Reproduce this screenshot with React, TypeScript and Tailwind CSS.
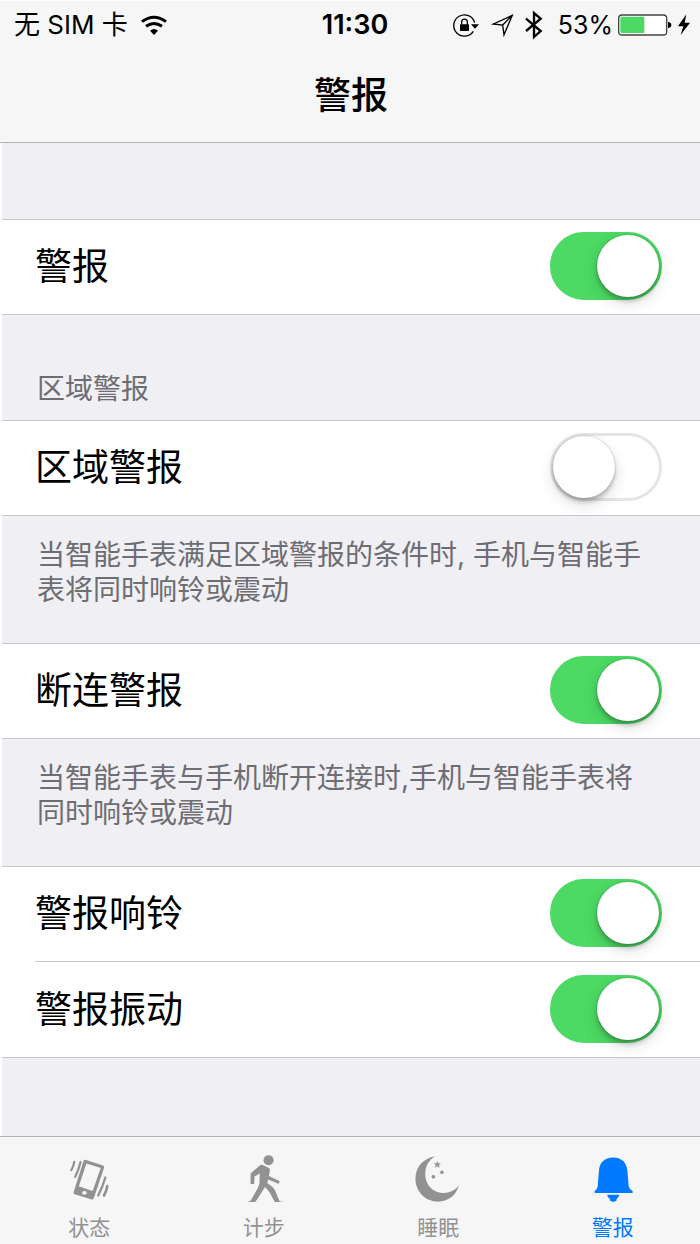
import { useState, type ReactNode } from "react";

type TabKey = "status" | "steps" | "sleep" | "alarm";

function WifiIcon() {
  return (
    <svg viewBox="423 39 84 66" className="h-[22px] w-7" fill="none" stroke="#000" strokeWidth="9" aria-hidden="true">
      <path d="M429 62 Q465 35 501 62" />
      <path d="M441 76 Q465 59 489 76" />
      <path d="M453 89 Q465 79 477 89 L465 102 Z" fill="#000" stroke="none" />
    </svg>
  );
}

function RotationLockIcon() {
  return (
    <svg viewBox="304 30 84 84" className="size-7" fill="none" stroke="#000" aria-hidden="true">
      <path d="M372 65 A32 32 0 1 0 368 91" strokeWidth="4" />
      <path d="M361 70 H385 L373 83 Z" fill="#000" stroke="none" />
      <rect x="328" y="70" width="27" height="20" rx="2" fill="#000" stroke="none" />
      <path d="M333 71 V63 a8.5 8.5 0 0 1 17 0 V71" strokeWidth="4" />
    </svg>
  );
}

function LocationIcon() {
  return (
    <svg viewBox="420 30 78 84" className="h-7 w-[26px]" fill="none" stroke="#000" aria-hidden="true">
      <path d="M487 43 L430 69 L458 72 L462 101 Z M487 43 L458 72" strokeWidth="4" />
    </svg>
  );
}

function BluetoothIcon() {
  return (
    <svg viewBox="525 30 60 90" className="h-[30px] w-5" fill="none" stroke="#000" strokeWidth="7" aria-hidden="true">
      <path d="M531 56 L575 93 L555 111 V39 L575 56 L531 93" />
    </svg>
  );
}

function BatteryIcon() {
  return (
    <svg viewBox="801 36 168 78" className="h-[26px] w-14" aria-hidden="true">
      <rect x="806" y="45" width="144" height="60" rx="10" fill="#fff" stroke="#444" strokeWidth="4" />
      <path d="M811 54 q0 -4 4 -4 H883 V99 H815 q-4 0 -4 -4 Z" fill="#4cd964" />
      <path d="M954 66 q10 1 10 9 t-10 9 Z" fill="#000" />
    </svg>
  );
}

function BoltIcon() {
  return (
    <svg viewBox="981 39 42 72" className="h-6 w-3.5" aria-hidden="true">
      <path d="M1009 43 L984 79 H1000 L992 105 L1020 68 H1004 Z" fill="#000" />
    </svg>
  );
}

function PhoneIcon() {
  return (
    <svg viewBox="189 66 156 156" className="size-[52px]" aria-hidden="true">
      <path
        fill="currentColor"
        fillRule="evenodd"
        d="M256 87 L310 104 Q315 106 313 111 L282 204 Q280 209 275 208 L223 192 Q218 190 220 185 L250 91 Q252 86 256 87 Z M259 98 L303 112 L278 182 L236 168 Z M253 182 a7 6 0 1 0 .1 0 Z"
      />
      <g fill="none" stroke="currentColor" strokeWidth="7" strokeLinecap="round">
        <path d="M222 93 Q220 106 213 118" />
        <path d="M241 94 Q235 118 225 139" />
        <path d="M317 141 Q309 170 295 196" />
        <path d="M323 167 Q321 182 313 196" strokeWidth="8" />
      </g>
    </svg>
  );
}

function WalkIcon() {
  return (
    <svg viewBox="714 66 156 156" className="size-[52px]" fill="currentColor" aria-hidden="true">
      <circle cx="806" cy="88" r="15.5" />
      <path d="M781 103 Q786 101 791 104 L806 111 Q811 114 810 120 L807 136 L838 151 Q842 154 836 160 L805 147 L802 158 L817 169 Q823 174 826 181 L840 214 H848 V216 H825 L809 186 L795 170 L770 210 L764 216 H745 V213 H751 L773 173 L778 159 L779 129 L763 138 L762 161 H751 V132 Q751 128 755 125 Z" />
    </svg>
  );
}

function MoonIcon() {
  return (
    <svg viewBox="189 66 156 156" className="size-[52px]" fill="currentColor" aria-hidden="true">
      <path d="M258 76 C222 82 198 109 198 145 C198 184 229 215 266 215 C298 215 323 196 331 165 C317 183 300 189 282 188 C249 186 228 162 228 130 C228 107 239 87 258 76 Z" />
      <path d="M265 92 L267 98 L274 98 L269 103 L271 110 L265 106 L259 110 L261 103 L256 98 L263 98 Z" stroke="currentColor" strokeWidth="1.5" />
      <circle cx="279" cy="125" r="5.5" />
      <circle cx="253" cy="139" r="5.5" />
    </svg>
  );
}

function BellIcon() {
  return (
    <svg viewBox="714 66 156 156" className="size-[52px]" fill="currentColor" aria-hidden="true">
      <path d="M793 80 C820 81 833 95 836 120 L840 168 Q842 178 852 182 V188 H736 V182 Q743 179 745 169 L749 120 C751 95 766 80 793 80 Z" />
      <path d="M774 194 H811 Q810 203 803 207 V211 Q792 219 783 211 V207 Q775 203 774 194 Z" />
    </svg>
  );
}

function Switch({ id, initial }: { id: string; initial: boolean }) {
  const [on, setOn] = useState(initial);
  return (
    <input
      id={id}
      type="checkbox"
      role="switch"
      checked={on}
      onChange={() => setOn(!on)}
      className="h-[68px] w-28 shrink-0 cursor-pointer appearance-none rounded-full border-[3px] border-[#e5e5e5] bg-white before:block before:size-[62px] before:rounded-full before:bg-white before:shadow-[0_4px_4px_rgba(0,0,0,0.2),0_6px_16px_rgba(0,0,0,0.14),0_0_2px_rgba(0,0,0,0.25)] before:content-[''] checked:border-[#4cd964] checked:bg-[#4cd964] checked:before:translate-x-11"
    />
  );
}

function Row({ id, label, on, divided = false }: { id: string; label: string; on: boolean; divided?: boolean }) {
  return (
    <div className="pl-[33px]">
      <div
        className={
          divided
            ? "flex h-24 items-start justify-between border-t border-[#c8c7cc] pt-[13px] pr-[38px]"
            : "flex h-[94px] items-start justify-between pt-3 pr-[38px]"
        }
      >
        <label htmlFor={id} className="pt-[11px] text-[37px] leading-[48px] text-black">
          {label}
        </label>
        <Switch id={id} initial={on} />
      </div>
    </div>
  );
}

function Group({ children }: { children: ReactNode }) {
  return <div className="border-y border-[#c8c7cc] bg-white">{children}</div>;
}

function Note({ children }: { children: ReactNode }) {
  return <p className="h-[127px] pt-[22px] pr-12 pl-[35px] text-[28px] leading-[35px] text-[#6d6d72]">{children}</p>;
}

const tabs: { key: TabKey; label: string; icon: ReactNode }[] = [
  { key: "status", label: "状态", icon: <PhoneIcon /> },
  { key: "steps", label: "计步", icon: <WalkIcon /> },
  { key: "sleep", label: "睡眠", icon: <MoonIcon /> },
  { key: "alarm", label: "警报", icon: <BellIcon /> },
];

export default function App() {
  const [active, setActive] = useState<TabKey>("alarm");
  return (
    <div className="flex min-h-screen flex-col bg-[#efeff4] font-['Inter','Noto_Sans_CJK_SC',sans-serif]">
      <header className="border-t border-b border-t-white border-b-[#b2b2b2] bg-[#f6f6f7]">
        <div className="grid h-12 grid-cols-[1fr_auto_1fr] items-center text-[26px] leading-8 text-black">
          <div className="flex items-center gap-3 pl-3.5">
            <span>无 SIM 卡</span>
            <WifiIcon />
          </div>
          <time className="pl-2.5 text-[27px] font-semibold">11:30</time>
          <div className="flex items-center justify-end pr-[9px]">
            <RotationLockIcon />
            <span className="pl-2.5">
              <LocationIcon />
            </span>
            <span className="pr-3.5 pl-2">
              <BluetoothIcon />
            </span>
            <span className="text-[25px]">53%</span>
            <span className="px-1">
              <BatteryIcon />
            </span>
            <BoltIcon />
          </div>
        </div>
        <h1 className="h-[93px] pt-[21px] pl-0.5 text-center text-[37px] leading-[52px] font-medium text-black">警报</h1>
      </header>

      <main className="flex-1 border-l-2 border-white pt-[76px]">
        <Group>
          <Row id="alarm" label="警报" on />
        </Group>
        <h2 className="h-[105px] pt-[53px] pl-[35px] text-[28px] leading-[42px] text-[#6d6d72]">区域警报</h2>
        <Group>
          <Row id="zone" label="区域警报" on={false} />
        </Group>
        <Note>当智能手表满足区域警报的条件时, 手机与智能手表将同时响铃或震动</Note>
        <Group>
          <Row id="disconnect" label="断连警报" on />
        </Group>
        <Note>当智能手表与手机断开连接时,手机与智能手表将同时响铃或震动</Note>
        <Group>
          <Row id="ring" label="警报响铃" on />
          <Row id="vibrate" label="警报振动" on divided />
        </Group>
      </main>

      <nav className="grid grid-cols-4 border-t border-[#b2b2b2] bg-[#f6f6f7] pl-0.5">
        {tabs.map((tab) => (
          <button
            key={tab.key}
            type="button"
            onClick={() => setActive(tab.key)}
            aria-current={active === tab.key ? "page" : undefined}
            className={
              active === tab.key
                ? "flex h-[107px] flex-col items-center gap-2 pt-4 text-[#007aff]"
                : "flex h-[107px] flex-col items-center gap-2 pt-4 text-[#929292]"
            }
          >
            {tab.icon}
            <span className="text-[21px] leading-8">{tab.label}</span>
          </button>
        ))}
      </nav>
    </div>
  );
}
